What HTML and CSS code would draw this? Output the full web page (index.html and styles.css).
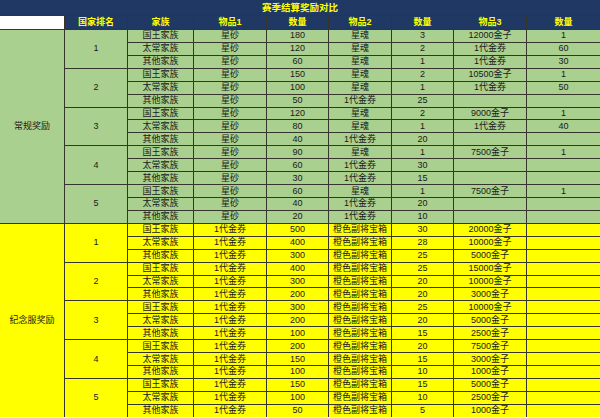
FILE: index.html
```html
<!DOCTYPE html>
<html lang="zh">
<head>
<meta charset="utf-8">
<link rel="stylesheet" href="styles.css">
</head>
<body>
<div class="sheet">
  <div class="title">赛季结算奖励对比</div>
  <div class="blank"></div>
  <div class="hd">国家排名</div>
  <div class="hd">家族</div>
  <div class="hd">物品1</div>
  <div class="hd">数量</div>
  <div class="hd">物品2</div>
  <div class="hd">数量</div>
  <div class="hd">物品3</div>
  <div class="hd">数量</div>

  <div class="sec green">
    <div class="cat">常规奖励</div>
    <div class="rank">1</div>
    <div>国王家族</div><div>星砂</div><div>180</div><div>星魂</div><div>3</div><div>12000金子</div><div>1</div>
    <div>太常家族</div><div>星砂</div><div>120</div><div>星魂</div><div>2</div><div>1代金券</div><div>60</div>
    <div>其他家族</div><div>星砂</div><div>60</div><div>星魂</div><div>1</div><div>1代金券</div><div>30</div>
    <div class="rank">2</div>
    <div>国王家族</div><div>星砂</div><div>150</div><div>星魂</div><div>2</div><div>10500金子</div><div>1</div>
    <div>太常家族</div><div>星砂</div><div>100</div><div>星魂</div><div>1</div><div>1代金券</div><div>50</div>
    <div>其他家族</div><div>星砂</div><div>50</div><div>1代金券</div><div>25</div><div></div><div></div>
    <div class="rank">3</div>
    <div>国王家族</div><div>星砂</div><div>120</div><div>星魂</div><div>2</div><div>9000金子</div><div>1</div>
    <div>太常家族</div><div>星砂</div><div>80</div><div>星魂</div><div>1</div><div>1代金券</div><div>40</div>
    <div>其他家族</div><div>星砂</div><div>40</div><div>1代金券</div><div>20</div><div></div><div></div>
    <div class="rank">4</div>
    <div>国王家族</div><div>星砂</div><div>90</div><div>星魂</div><div>1</div><div>7500金子</div><div>1</div>
    <div>太常家族</div><div>星砂</div><div>60</div><div>1代金券</div><div>30</div><div></div><div></div>
    <div>其他家族</div><div>星砂</div><div>30</div><div>1代金券</div><div>15</div><div></div><div></div>
    <div class="rank">5</div>
    <div>国王家族</div><div>星砂</div><div>60</div><div>星魂</div><div>1</div><div>7500金子</div><div>1</div>
    <div>太常家族</div><div>星砂</div><div>40</div><div>1代金券</div><div>20</div><div></div><div></div>
    <div>其他家族</div><div>星砂</div><div>20</div><div>1代金券</div><div>10</div><div></div><div></div>
  </div>

  <div class="sec yellow">
    <div class="cat">纪念服奖励</div>
    <div class="rank">1</div>
    <div>国王家族</div><div>1代金券</div><div>500</div><div>橙色副将宝箱</div><div>30</div><div>20000金子</div><div></div>
    <div>太常家族</div><div>1代金券</div><div>400</div><div>橙色副将宝箱</div><div>28</div><div>10000金子</div><div></div>
    <div>其他家族</div><div>1代金券</div><div>300</div><div>橙色副将宝箱</div><div>25</div><div>5000金子</div><div></div>
    <div class="rank">2</div>
    <div>国王家族</div><div>1代金券</div><div>400</div><div>橙色副将宝箱</div><div>25</div><div>15000金子</div><div></div>
    <div>太常家族</div><div>1代金券</div><div>300</div><div>橙色副将宝箱</div><div>20</div><div>10000金子</div><div></div>
    <div>其他家族</div><div>1代金券</div><div>200</div><div>橙色副将宝箱</div><div>20</div><div>3000金子</div><div></div>
    <div class="rank">3</div>
    <div>国王家族</div><div>1代金券</div><div>300</div><div>橙色副将宝箱</div><div>25</div><div>10000金子</div><div></div>
    <div>太常家族</div><div>1代金券</div><div>200</div><div>橙色副将宝箱</div><div>20</div><div>5000金子</div><div></div>
    <div>其他家族</div><div>1代金券</div><div>100</div><div>橙色副将宝箱</div><div>15</div><div>2500金子</div><div></div>
    <div class="rank">4</div>
    <div>国王家族</div><div>1代金券</div><div>200</div><div>橙色副将宝箱</div><div>20</div><div>7500金子</div><div></div>
    <div>太常家族</div><div>1代金券</div><div>150</div><div>橙色副将宝箱</div><div>15</div><div>3000金子</div><div></div>
    <div>其他家族</div><div>1代金券</div><div>100</div><div>橙色副将宝箱</div><div>10</div><div>1000金子</div><div></div>
    <div class="rank">5</div>
    <div>国王家族</div><div>1代金券</div><div>150</div><div>橙色副将宝箱</div><div>15</div><div>5000金子</div><div></div>
    <div>太常家族</div><div>1代金券</div><div>100</div><div>橙色副将宝箱</div><div>10</div><div>2500金子</div><div></div>
    <div>其他家族</div><div>1代金券</div><div>50</div><div>橙色副将宝箱</div><div>5</div><div>1000金子</div><div></div>
  </div>
</div>
</body>
</html>
```

FILE: styles.css
```css
html, body {
  margin: 0;
  padding: 0;
  background: #ffffff;
}

.sheet {
  display: grid;
  grid-template-columns: 64px 62px 65px 72px 61px 62px 61px 72px 73px;
  grid-template-rows: 15px 13px repeat(30, 11.93px);
  gap: 1px;
  width: 600px;
  background: #35352c;
  font-family: "Liberation Sans", "Noto Sans CJK SC", sans-serif;
  font-size: 9px;
  color: #1a1a1a;
}

.sheet div {
  display: flex;
  align-items: center;
  justify-content: center;
  white-space: nowrap;
  line-height: 9px;
}

.sheet .sec {
  display: contents;
}

.title {
  grid-column: 1 / -1;
  background: #1f3864;
  color: #ffff00;
  font-weight: bold;
  font-size: 9.5px;
}

.blank {
  background: #ffffff;
}

.hd {
  background: #1f3864;
  color: #ffff00;
  font-weight: bold;
}

.green > div {
  background: #a9d08e;
}

.yellow > div {
  background: #ffff00;
}

.cat {
  grid-row: span 15;
}

.rank {
  grid-row: span 3;
}
```
